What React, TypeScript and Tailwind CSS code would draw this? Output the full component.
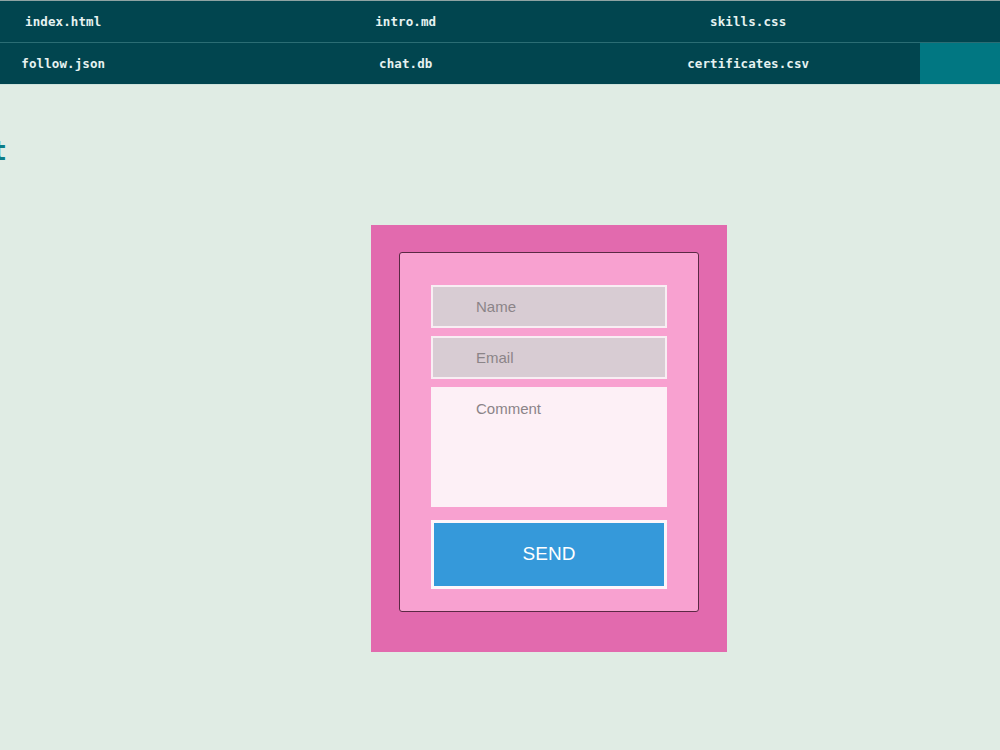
import type { ReactNode } from "react";

const mono = { fontFamily: '"DejaVu Sans Mono", "Liberation Mono", monospace' };
const sans = { fontFamily: '"Liberation Sans", Arial, sans-serif' };

function NavCell({ children, active }: { children?: ReactNode; active?: boolean }) {
  return (
    <div
      className={`flex h-[41px] items-center justify-center pt-[1px] text-[12.5px] font-semibold tracking-[0.1px] text-[#e6f2f1] ${
        active ? "bg-[#017782]" : ""
      }`}
    >
      {children}
    </div>
  );
}

function Field({ label }: { label: string }) {
  return (
    <input
      placeholder={label}
      className="h-[43px] w-full border-2 border-[#f8eef3] bg-[#d8ccd3] pl-[43px] text-[15px] text-[#5a5058] outline-none placeholder:text-[#8b8488]"
      style={sans}
    />
  );
}

export default function App() {
  return (
    <div className="min-h-[750px] w-[1000px] overflow-hidden bg-[#e0ece4]">
      <nav className="border-t border-[#8ea3a3] bg-[#01454f]" style={mono}>
        <div className="-ml-[108px] grid w-[1370px] grid-cols-4 border-b border-[#2b6d74]">
          <NavCell>index.html</NavCell>
          <NavCell>intro.md</NavCell>
          <NavCell>skills.css</NavCell>
          <NavCell />
        </div>
        <div className="-ml-[108px] grid w-[1370px] grid-cols-4 border-b border-[#cfe3dc]">
          <NavCell>follow.json</NavCell>
          <NavCell>chat.db</NavCell>
          <NavCell>certificates.csv</NavCell>
          <NavCell active />
        </div>
      </nav>

      {/* heading runs off the left edge, only its last letter shows */}
      <div className="mt-[51px] flex w-[7px] justify-end">
        <h2
          className="whitespace-nowrap text-[26px] font-bold leading-[30px] text-[#0c7d88]"
          style={mono}
        >
          Contact
        </h2>
      </div>

      <div className="ml-[371px] mt-[59px] w-[356px] bg-[#e26aae] px-[28px] pb-[40px] pt-[27px]">
        <form className="flex flex-col rounded-[3px] border border-[#5b2944] bg-[#f8a1d0] px-[31px] pb-[22px] pt-[32px]">
          <div className="flex flex-col gap-[8px]">
            <Field label="Name" />
            <Field label="Email" />
            <textarea
              placeholder="Comment"
              className="h-[120px] w-full resize-none border-2 border-[#fdf0f6] bg-[#fdf0f6] pl-[43px] pt-[9px] text-[15px] text-[#5a5058] outline-none placeholder:text-[#8b8488]"
              style={sans}
            />
          </div>
          <button
            type="button"
            className="mt-[13px] h-[69px] w-full border-[3px] border-[#fdf6fa] bg-[#3599da] text-[19px] text-white"
            style={sans}
          >
            SEND
          </button>
        </form>
      </div>
    </div>
  );
}
